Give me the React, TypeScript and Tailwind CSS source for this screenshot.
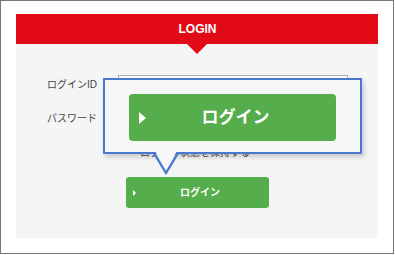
import React from "react";

export default function App() {
  return (
    <div
      className="relative w-[394px] h-[254px] border border-[#777] bg-white pt-[13px] px-[15px] overflow-hidden"
      style={{ fontFamily: '"Liberation Sans", "Noto Sans CJK JP", sans-serif' }}
    >
      {/* Header */}
      <div className="relative h-[30px] bg-[#e20a17] flex items-center justify-center">
        <span className="text-white font-bold text-[12px] leading-none pl-px">LOGIN</span>
        <div className="absolute left-1/2 -translate-x-1/2 top-full w-0 h-0 border-l-[10px] border-r-[10px] border-t-[10px] border-l-transparent border-r-transparent border-t-[#e20a17]" />
      </div>

      {/* Panel */}
      <div className="h-[194px] bg-[#f5f5f5] pt-[31px] pl-[31px]">
        <div className="flex items-center h-[20px]">
          <span className="w-[71px] text-[10px] text-[#444] leading-none">ログインID</span>
          <div className="w-[230px] h-[20px] border border-[#aaa] bg-white" />
        </div>
        <div className="flex items-center h-[20px] mt-[14px]">
          <span className="w-[71px] text-[10px] text-[#444] leading-none">パスワード</span>
          <div className="w-[230px] h-[20px] border border-[#aaa] bg-white" />
        </div>
        <div className="flex items-center h-[14px] mt-[17px] ml-[93px]">
          <span className="text-[10px] text-[#444] leading-none">ログイン状態を保持する</span>
        </div>
        <button className="relative mt-[17px] ml-[79px] w-[143px] h-[31px] rounded-[3px] bg-[#56ad4c] flex items-center justify-center">
          <span className="absolute left-[7px] top-1/2 -translate-y-1/2 w-0 h-0 border-t-[3px] border-b-[3px] border-l-[3px] border-t-transparent border-b-transparent border-l-white" />
          <span className="text-white font-bold text-[10px] leading-none pl-[5px]">ログイン</span>
        </button>
      </div>

      {/* Popover */}
      <div className="absolute left-[102px] top-[77px] w-[259px]">
        <div className="h-[76px] border-2 border-[#4878d2] bg-[#f7f7f7] shadow-[2px_3px_5px_rgba(0,0,0,0.18)] pt-[14px] pl-[24px]">
          <div className="relative w-[207px] h-[47px] rounded-[4px] bg-[#56ad4c] flex items-center justify-center">
            <span className="absolute left-[10px] top-1/2 -translate-y-1/2 w-0 h-0 border-t-[6px] border-b-[6px] border-l-[7px] border-t-transparent border-b-transparent border-l-white" />
            <span className="text-white font-bold text-[17px] leading-none pl-[6px]">ログイン</span>
          </div>
        </div>
        <svg
          className="absolute left-[48px] top-[73px]"
          width="30"
          height="26"
          viewBox="0 0 30 26"
        >
          <polygon points="4,0 26,0 15,20" fill="#f7f7f7" />
          <polyline
            points="3,2 15,22 27,2"
            fill="none"
            stroke="#4878d2"
            strokeWidth="2.4"
            strokeLinejoin="miter"
          />
        </svg>
      </div>
    </div>
  );
}
